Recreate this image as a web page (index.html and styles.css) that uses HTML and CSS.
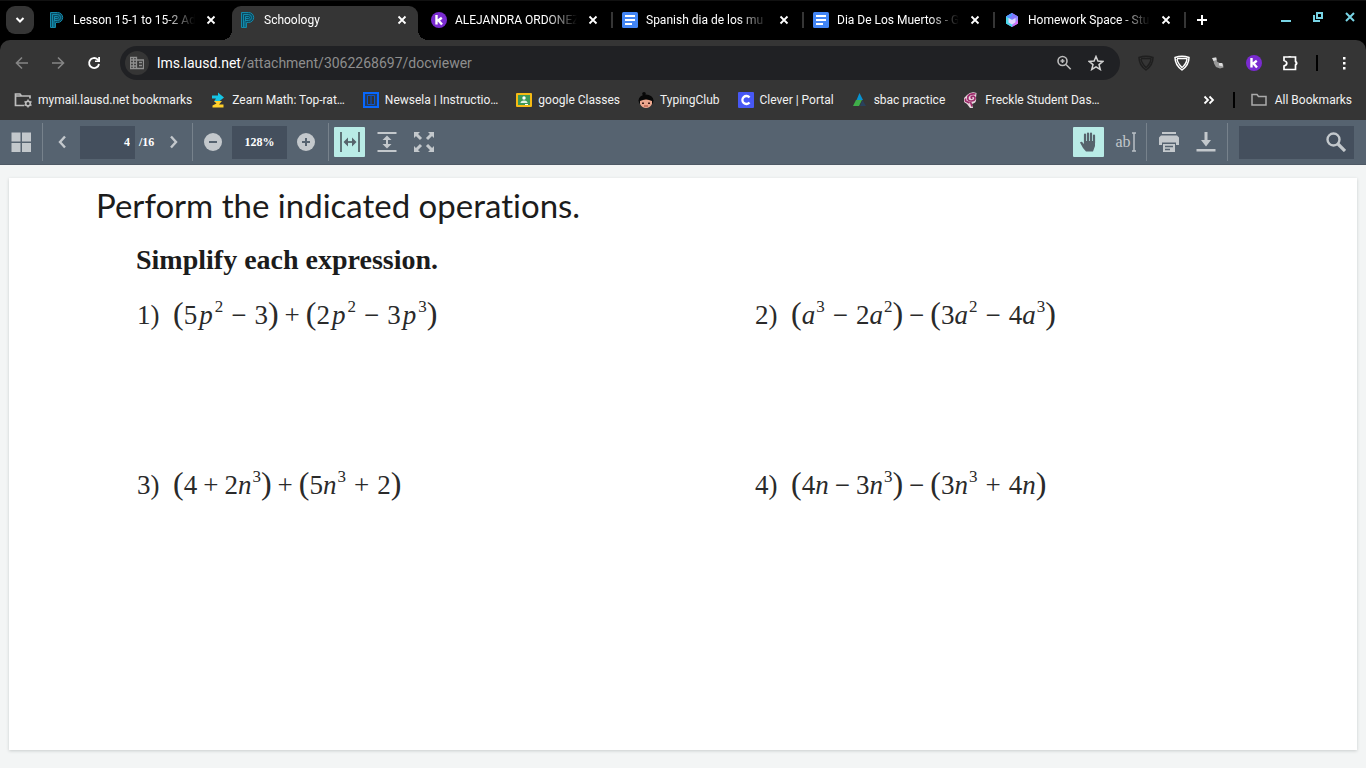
FILE: index.html
```html
<!DOCTYPE html>
<html lang="en">
<head>
<meta charset="utf-8">
<title>Schoology</title>
<link rel="stylesheet" href="styles.css">
</head>
<body>
<svg class="defs" aria-hidden="true">
  <symbol id="x" viewBox="0 0 16 16"><path d="M4.500 4.500l7 7M11.500 4.500l-7 7" fill="none" stroke="#fff" stroke-width="1.800"/></symbol>
  <symbol id="ps" viewBox="0 0 16 16"><path d="M2 1h7a4 4 0 0 1 0 9H6v5H2z" fill="#0b4a60"/><g fill="none" stroke="#1389aa" stroke-width="1"><path d="M1.500 15.500V.500h7.200a4.500 4.500 0 0 1 0 10H6.500v5zM3.500 15V2.500h5a2.700 2.700 0 0 1 0 6H5V15M5.500 8V4.500h3a1 1 0 0 1 0 2H5.500"/></g></symbol>
  <symbol id="k" viewBox="0 0 16 16"><circle cx="8" cy="8" r="8" fill="#7a2bd0"/><path d="M5.500 3v9.500M10.800 5.800L6.500 9M7.500 8.500l3.500 4" fill="none" stroke="#fff" stroke-width="2.400"/></symbol>
  <symbol id="doc" viewBox="0 0 16 16"><rect width="16" height="16" rx="1.500" fill="#4285f4"/><path d="M3 4h10M3 8h10M3 12h7" stroke="#fff" stroke-width="2"/></symbol>
  <symbol id="shield" viewBox="0 0 16 16"><path d="M1 2.500Q8 .200 15 2.500Q15 10 8 15Q1 10 1 2.500z" fill="none" stroke="currentColor" stroke-width="1.500"/><path d="M3 3.500h10.500M3 4Q3.500 8 8 12.500M13 4Q12.500 9 7.500 13" fill="none" stroke="currentColor" stroke-width="1.500"/></symbol>
</svg>

<header class="browser">
  <div class="tabstrip">
    <button class="tab-search" aria-label="Search tabs"><svg width="12" height="12" viewBox="0 0 12 12"><path d="M2.500 4L6 7.500 9.500 4" fill="none" stroke="#fff" stroke-width="2"/></svg></button>
    <nav class="tabs" aria-label="Tabs">
      <div class="tab"><svg class="i16"><use href="#ps"/></svg><a class="tab-title" href="#">Lesson 15-1 to 15-2 Ad</a><button class="close" aria-label="Close tab"><svg class="i16"><use href="#x"/></svg></button></div>
      <div class="tab active"><svg class="i16"><use href="#ps"/></svg><a class="tab-title" href="#">Schoology</a><button class="close" aria-label="Close tab"><svg class="i16"><use href="#x"/></svg></button></div>
      <div class="tab"><svg class="i16"><use href="#k"/></svg><a class="tab-title" href="#">ALEJANDRA ORDONEZ</a><button class="close" aria-label="Close tab"><svg class="i16"><use href="#x"/></svg></button></div>
      <div class="tab ruled"><svg class="i16"><use href="#doc"/></svg><a class="tab-title" href="#">Spanish dia de los mu</a><button class="close" aria-label="Close tab"><svg class="i16"><use href="#x"/></svg></button></div>
      <div class="tab ruled"><svg class="i16"><use href="#doc"/></svg><a class="tab-title" href="#">Dia De Los Muertos - G</a><button class="close" aria-label="Close tab"><svg class="i16"><use href="#x"/></svg></button></div>
      <div class="tab ruled"><svg class="i16" viewBox="0 0 16 16"><path d="M8 1l6 3.500v7L8 15l-6-3.500v-7z" fill="#9b8cff"/><path d="M8 1l6 3.500-6 3-6-3z" fill="#8178ff"/><path d="M2 4.500l6 3V15l-6-3.500z" fill="#49d9e8"/><path d="M4.500 6l3.500 2 3.500-2v4.500L8 12.500l-3.500-2z" fill="#e2d5ff"/><path d="M2 4.500L8 1v3L4.500 6z" fill="#4a9cff"/><path d="M8 15l6-3.500V8l-3 3z" fill="#d86cf2"/></svg><a class="tab-title" href="#">Homework Space - Stu</a><button class="close" aria-label="Close tab"><svg class="i16"><use href="#x"/></svg></button></div>
    </nav>
    <button class="new-tab ruled" aria-label="New tab"><svg width="12" height="12" viewBox="0 0 12 12"><path d="M6 1v10M1 6h10" stroke="#fff" stroke-width="2"/></svg></button>
    <div class="window-controls">
      <button aria-label="Minimize"><svg class="i16" viewBox="0 0 16 16"><path d="M3 12h10" stroke="#78d4e5" stroke-width="2"/></svg></button>
      <button aria-label="Restore"><svg class="i16" viewBox="0 0 16 16"><path d="M7 4h5v5H7zM4 6v6h6" fill="none" stroke="#78d4e5" stroke-width="2"/></svg></button>
      <button aria-label="Close window"><svg class="i16" viewBox="0 0 16 16"><path d="M4 4l8 8M12 4l-8 8" stroke="#78d4e5" stroke-width="2"/></svg></button>
    </div>
  </div>

  <div class="toolbar">
    <div class="nav-buttons">
      <button aria-label="Back"><svg class="i16" viewBox="0 0 16 16"><path d="M14 8H3M8 2.500L2.500 8 8 13.500" fill="none" stroke="#858585" stroke-width="1.600"/></svg></button>
      <button aria-label="Forward"><svg class="i16" viewBox="0 0 16 16"><path d="M2 8h11M8 2.500L13.500 8 8 13.500" fill="none" stroke="#858585" stroke-width="1.600"/></svg></button>
      <button aria-label="Reload"><svg class="i16" viewBox="0 0 16 16"><path d="M13 9a5 5 0 1 1-1.500-4.600L13 6" fill="none" stroke="#fff" stroke-width="1.900"/><path d="M14 2v5H9V5.500h3.200V2z" fill="#fff"/></svg></button>
    </div>
    <div class="omnibox">
      <button class="site-info" aria-label="Site information"><svg width="14" height="14" viewBox="0 0 14 14"><path d="M.500 1.500h6v11h-6zM6.500 4h7v8.500h-7M.500 4h6M.500 7h6M.500 10h6M3.500 1.500v11M9 6.500h3M9 9.500h3" fill="none" stroke="#8f8f8f" stroke-width="1.300"/></svg></button>
      <a class="url" href="#"><span>lms.lausd.net</span>/attachment/3062268697/docviewer</a>
      <button aria-label="Zoom"><svg class="i16" viewBox="0 0 16 16"><circle cx="6.500" cy="6" r="4.500" fill="none" stroke="#bcbcbc" stroke-width="1.600"/><path d="M10 9.500l4.700 4.700M4.500 6h4M6.500 4v4" stroke="#bcbcbc" stroke-width="1.600"/></svg></button>
      <button aria-label="Bookmark this page"><svg class="i16" viewBox="0 0 16 16"><path d="M8 1.500l1.900 4.600 5 .3-3.900 3.200 1.300 4.900L8 11.800l-4.300 2.700L5 9.600 1.100 6.400l5-.3z" fill="none" stroke="#d2d2d2" stroke-width="1.500"/></svg></button>
    </div>
    <div class="extensions">
      <button class="dim" aria-label="Shield extension"><svg class="i16"><use href="#shield"/></svg></button>
      <button aria-label="Privacy extension"><svg class="i16"><use href="#shield"/></svg></button>
      <button aria-label="Boot extension"><svg class="i16" viewBox="0 0 16 16"><path d="M3 3l3.500-.5.5 4 2.500 1.500 3.500.5.500 4-3.500 1L6 12 4 8.500z" fill="#999"/><path d="M2 3l4-.5.5 2.500-3 1zM9 8l3 0 1 3.500-4-1z" fill="#ddd"/></svg></button>
      <button aria-label="Kami extension"><svg class="i16"><use href="#k"/></svg></button>
      <button aria-label="Extensions"><svg class="i16" viewBox="0 0 16 16"><path d="M2 2h11.500v4.500q2.500 1.500 0 3.500v4.500H2v-3.500q2.800-.8 2.800-2.700T2 5.500z" fill="none" stroke="#fff" stroke-width="1.700"/><path d="M6 2q1.800-2 3.500 0zM13.500 6q3 2 0 4.500z" fill="#fff"/></svg></button>
      <i class="rule"></i>
      <button aria-label="Menu"><svg class="i16" viewBox="0 0 16 16"><path d="M7 2h2.500v2.500H7zM7 7h2.500v2.500H7zM7 12h2.500v2.500H7z" fill="#fff"/></svg></button>
    </div>
  </div>

  <nav class="bookmarks" aria-label="Bookmarks">
    <a href="#"><svg width="18" height="16" viewBox="0 0 18 16"><path d="M10 13.500H1.500V2H6l1.500 2H16v2.500M1.500 4H7" fill="none" stroke="#bdbdbd" stroke-width="1.700"/><circle cx="14" cy="11.500" r="2.300" fill="none" stroke="#bdbdbd" stroke-width="1.600"/><path d="M14 7.500v1.700M14 13.800v1.700M10.500 9.500l1.500.9M16 12.600l1.500.9M10.500 13.500l1.500-.9M16 10.400l1.500-.9" stroke="#bdbdbd" stroke-width="1.500"/></svg>mymail.lausd.net bookmarks</a>
    <a href="#"><svg class="i16" viewBox="0 0 16 16"><path d="M2 3.500h6V.500L14 5.500 9 9.500H4L6 6.500H2z" fill="#16c5e5"/><path d="M4 9h8l-3 3.500h4.500v3H2.500v-2l4-2z" fill="#ffd02b"/></svg>Zearn Math: Top-rat…</a>
    <a href="#"><svg class="i16" viewBox="0 0 16 16"><path d="M1 1h14v14H1z" fill="#263b5c" stroke="#0868ff" stroke-width="2"/><path d="M4.500 3.500h7v9h-7zM8 3.500v9" fill="#333" stroke="#0b56cf"/></svg>Newsela | Instructio…</a>
    <a href="#"><svg class="i16" viewBox="0 0 16 16"><rect y="1" width="16" height="14" rx="1" fill="#f5ba14"/><path d="M2 3h12v10H2z" fill="#3d9857"/><circle cx="8" cy="6" r="1.700" fill="#fff"/><path d="M4.500 11Q4.500 8.500 8 8.500t3.500 2.500z" fill="#dff1e3"/><path d="M9 12h3v1H9z" fill="#fff"/></svg>google Classes</a>
    <a href="#"><svg class="i16" viewBox="0 0 16 16"><circle cx="6" cy="1.800" r="1.800" fill="#080808"/><ellipse cx="8" cy="8.500" rx="7.500" ry="6" fill="#080808"/><path d="M2 9q6-3 12 0v3q-2 4-6 4t-6-4z" fill="#eda78e"/><path d="M4 10.500h2v1.500H4zM10 10.500h2v1.500h-2z" fill="#401c18"/><path d="M6 14h4" stroke="#a34034"/></svg>TypingClub</a>
    <a href="#"><svg class="i16" viewBox="0 0 16 16"><rect width="16" height="16" rx="1" fill="#4758f5"/><path d="M11.500 5.500A4 4 0 1 0 11.500 10.500" fill="none" stroke="#fff" stroke-width="2.300"/></svg>Clever | Portal</a>
    <a href="#"><svg class="i16" viewBox="0 0 16 16"><path d="M7.500 1L11 8H4.500z" fill="#0793d1"/><path d="M4 8h6L7 14H1z" fill="#3fae49"/><path d="M10.500 8L14 14H8z" fill="#29415c"/></svg>sbac practice</a>
    <a href="#"><svg class="i16" viewBox="0 0 16 16"><path d="M13.500 1Q8-1 4 3L1 6v4l3 2 3 4h3l-1-4q5-1 4-6z" fill="#e8d8df"/><path d="M12.500 2Q7 1 5 4.500q-1 4.500 3 4.500 4.500 0 4-3.500-1-2-3.500-1-1 1.500 1 2M2.500 6.500v2.500l4 2M7.500 10l1.500 4.500" fill="none" stroke="#9d2b6b" stroke-width="1.700"/></svg>Freckle Student Das…</a>
    <button class="more" aria-label="More bookmarks"><svg width="12" height="12" viewBox="0 0 12 12"><path d="M1.500 2.500L5 6 1.500 9.500M6.500 2.500L10 6 6.500 9.500" fill="none" stroke="#fff" stroke-width="1.800"/></svg></button>
    <i class="rule"></i>
    <a class="all" href="#"><svg class="i16" viewBox="0 0 16 16"><path d="M1 13V2.500h5l1.500 2H15V13z" fill="none" stroke="#aaa" stroke-width="1.500"/></svg>All Bookmarks</a>
  </nav>
</header>

<div class="viewer-bar" role="toolbar" aria-label="Document">
  <div class="group thumbs"><button aria-label="Thumbnails"><svg class="i20" viewBox="0 0 20 20"><path d="M.500.500h9v9h-9zM11 .500h9v9h-9zM.500 11h9v9h-9zM11 11h9v9h-9z" fill="#c3c8cc"/></svg></button></div>
  <div class="group pages">
    <button aria-label="Previous page"><svg class="i16" viewBox="0 0 16 16"><path d="M11 2.500L6 8l5 5.500" fill="none" stroke="#c3c8cc" stroke-width="2.400"/></svg></button>
    <input class="page-number" type="text" value="4" aria-label="Page number"><span class="page-total">/16</span>
    <button aria-label="Next page"><svg class="i16" viewBox="0 0 16 16"><path d="M5 2.500L10 8l-5 5.500" fill="none" stroke="#c3c8cc" stroke-width="2.400"/></svg></button>
  </div>
  <div class="group zoom">
    <button aria-label="Zoom out"><svg class="i18" viewBox="0 0 18 18"><circle cx="9" cy="9" r="9" fill="#c3c8cc"/><path d="M5 9h8" stroke="#566370" stroke-width="2"/></svg></button>
    <input class="zoom-level" type="text" value="128%" aria-label="Zoom level">
    <button aria-label="Zoom in"><svg class="i18" viewBox="0 0 18 18"><circle cx="9" cy="9" r="9" fill="#c3c8cc"/><path d="M5 9h8M9 5v8" stroke="#566370" stroke-width="2"/></svg></button>
  </div>
  <div class="group fit">
    <button class="on" aria-label="Fit width"><svg class="i20" viewBox="0 0 20 20"><path d="M1 0v20M19 0v20M6 10h8" stroke="#5f7479" stroke-width="2"/><path d="M3.500 10L8 5.500v9zM16.500 10L12 5.500v9z" fill="#56636c"/></svg></button>
    <button aria-label="Fit height"><svg class="i20" viewBox="0 0 20 20"><path d="M.500 1h19M.500 19h19M10 6v8" stroke="#c3c8cc" stroke-width="2"/><path d="M10 3.500L14.500 8h-9zM10 16.500L14.500 12h-9z" fill="#c3c8cc"/></svg></button>
    <button aria-label="Full screen"><svg class="i20" viewBox="0 0 20 20"><path d="M2 2l5 5M18 2l-5 5M2 18l5-5M18 18l-5-5" stroke="#c3c8cc" stroke-width="3"/><path d="M0 0h6L0 6zM20 0h-6l6 6zM0 20v-6l6 6zM20 20v-6l-6 6z" fill="#c3c8cc"/></svg></button>
  </div>
  <div class="group modes">
    <button class="on" aria-label="Pan"><svg class="i20" viewBox="0 0 20 20"><path d="M6 11V2.500M9 10V1.500M12 10V1.500M15 11V3.500" fill="none" stroke="#56636c" stroke-width="2.200" stroke-linecap="round"/><path d="M5 9h11v5l-2 5.500H7L4 16 1 10.500q1.500-1.500 3 .5l1 1z" fill="#56636c"/></svg></button>
    <button class="select-text" aria-label="Select text"><span>ab</span><svg width="4" height="20" viewBox="0 0 4 20"><path d="M0 1h4M0 19h4M2 1v18" stroke="#b9c0c5" stroke-width="1.500"/></svg></button>
  </div>
  <div class="group output">
    <button aria-label="Print"><svg class="i20" viewBox="0 0 20 20"><path d="M3 0h14v2H3zM2 3.500h16l2 2V13h-3v-2.500H3V13H0V5.500zM4 12h12v8H4z" fill="#c3c8cc"/><path d="M6 14.500h8M6 17.500h5" stroke="#566370" stroke-width="1.400"/></svg></button>
    <button aria-label="Download"><svg class="i20" viewBox="0 0 20 20"><path d="M8.500 0h3v8H15l-5 6.500L5 8h3.500zM.500 17h19v2.500h-19z" fill="#c3c8cc"/></svg></button>
  </div>
  <form class="find"><input type="search" aria-label="Find in document"><button type="button" aria-label="Search"><svg class="i20" viewBox="0 0 20 20"><circle cx="7.500" cy="7.500" r="6" fill="none" stroke="#c3c8cc" stroke-width="2.400"/><path d="M12 12l7 7" stroke="#c3c8cc" stroke-width="3.200"/></svg></button></form>
</div>

<main class="viewer">
  <article class="page">
    <h1>Perform the indicated operations.</h1>
    <h2>Simplify each expression.</h2>
    <ol class="problems">
      <li><span class="num">1)</span><b>(</b>5<i class="p">p</i><sup>2</sup><u>−</u>3<b>)</b><s>+</s><b>(</b>2<i class="p">p</i><sup>2</sup><u>−</u>3<i class="p">p</i><sup>3</sup><b>)</b></li>
      <li><span class="num">2)</span><b>(</b><i>a</i><sup>3</sup><u>−</u>2<i>a</i><sup>2</sup><b>)</b><s>−</s><b>(</b>3<i>a</i><sup>2</sup><u>−</u>4<i>a</i><sup>3</sup><b>)</b></li>
      <li><span class="num">3)</span><b>(</b>4<s>+</s>2<i>n</i><sup>3</sup><b>)</b><s>+</s><b>(</b>5<i>n</i><sup>3</sup><u>+</u>2<b>)</b></li>
      <li><span class="num">4)</span><b>(</b>4<i>n</i><s>−</s>3<i>n</i><sup>3</sup><b>)</b><s>−</s><b>(</b>3<i>n</i><sup>3</sup><u>+</u>4<i>n</i><b>)</b></li>
    </ol>
  </article>
</main>
</body>
</html>
```
FILE: styles.css
```css
* { box-sizing: border-box; }
body { margin: 0; min-height: 100vh; display: flex; flex-direction: column; background: #f3f5f5; font-family: Roboto, sans-serif; font-size: 12px; }
button { display: flex; align-items: center; justify-content: center; padding: 0; border: 0; background: none; color: #fff; font: inherit; }
input { border: 0; border-radius: 0; padding: 0; font: inherit; outline: 0; }
a { color: #fff; text-decoration: none; }
svg { display: block; flex: none; }
.defs { position: absolute; width: 0; height: 0; }
.i16 { width: 16px; height: 16px; }
.i18 { width: 18px; height: 18px; }
.i20 { width: 20px; height: 20px; }
.rule { width: 2px; height: 16px; background: #000; }

/* Tab strip */
.browser { background: #000; }
.tabstrip { display: flex; align-items: center; height: 40px; padding: 0 8px 0 6px; box-shadow: inset 0 1px #111; }
.tab-search { width: 28px; height: 28px; margin-right: 7px; border-radius: 9px; background: #353535; flex: none; }
.tabs { display: flex; align-self: stretch; flex: 0 1 1146px; min-width: 0; }
.tab { position: relative; display: flex; align-items: center; gap: 8px; flex: 1 1 0; min-width: 0; padding: 0 13px 0 8px; }
.tab-title { flex: 1; min-width: 0; overflow: hidden; white-space: nowrap; mask-image: linear-gradient(to right, #000 calc(100% - 30px), transparent); }
.close { flex: none; }
.active { margin: 6px 5px 0 0; padding: 0 8px 6px; border-radius: 9px 9px 0 0; background: #353535; }
.active::before, .active::after { content: ""; position: absolute; bottom: 0; width: 10px; height: 10px; }
.active::before { right: 100%; background: radial-gradient(circle at 0 0, transparent 10px, #353535 10px); }
.active::after { left: 100%; background: radial-gradient(circle at 100% 0, transparent 10px, #353535 10px); }
.ruled { position: relative; }
.ruled::before { content: ""; position: absolute; left: -3px; top: calc(50% - 8px); width: 2px; height: 16px; background: #353535; }
.new-tab { width: 30px; height: 30px; }
.window-controls { display: flex; gap: 16px; margin: -6px 0 0 auto; }

/* Address row */
.toolbar { display: flex; align-items: center; height: 46px; padding: 0 14px; border-radius: 10px 10px 0 0; background: #353535; }
.nav-buttons { display: flex; gap: 20px; margin-right: 18px; }
.omnibox { display: flex; align-items: center; gap: 16px; flex: 1; min-width: 0; height: 34px; padding: 0 16px 0 5px; border-radius: 17px; background: #202124; }
.site-info { width: 24px; height: 24px; margin-right: -8px; border-radius: 50%; background: #353535; }
.url { flex: 1; min-width: 0; overflow: hidden; white-space: nowrap; font-size: 14px; color: #8e8e8e; }
.url span { color: #fff; }
.extensions { display: flex; align-items: center; gap: 20px; margin-left: 18px; }
.dim { color: #1f1f1f; }
.extensions .rule { margin: 0 -2px; }

/* Bookmarks row */
.bookmarks { display: flex; align-items: center; gap: 18px; height: 34px; padding: 0 14px 6px; background: #353535; }
.bookmarks a { display: flex; align-items: center; gap: 6px; white-space: nowrap; color: #f1f1f1; }
.more { margin-left: auto; }
.bookmarks .all { gap: 8px; margin-left: -2px; }

/* Document toolbar */
.viewer-bar { display: flex; align-items: center; height: 45px; padding: 0 12px 0 11px; background: #566370; border-bottom: 1px solid #4e5965; font-family: "Liberation Serif", serif; }
.group { display: flex; align-items: center; height: 38px; border-right: 1px solid #77828c; }
.thumbs { padding-right: 11px; }
.pages { padding: 0 10px 0 11px; }
.page-number, .zoom-level { width: 55px; height: 33px; background: #444f5d; color: #fff; font-size: 12px; font-weight: 700; }
.page-number { margin-left: 10px; padding-right: 5px; text-align: right; }
.page-total { width: 31px; padding-left: 4px; color: #fff; font-weight: 700; }
.zoom { gap: 10px; padding: 0 13px 0 11px; }
.zoom-level { text-align: center; }
.fit { gap: 6px; padding-left: 5px; border: 0; }
.fit button, .modes button, .output button { width: 31px; height: 30px; border-radius: 1px; }
.viewer-bar .on { background: #b9ebe6; }
.modes { gap: 6px; margin-left: auto; padding-right: 5px; }
.select-text { gap: 1px; color: #c3c8cc; font-size: 16px; }
.output { gap: 6px; padding: 0 6px; }
.find { display: flex; align-items: center; width: 115px; height: 33px; margin-left: 11px; padding-right: 8px; background: #444f5d; }
.find input { flex: 1; min-width: 0; height: 100%; background: transparent; color: #fff; }

/* Document */
.viewer { flex: 1; display: flex; padding: 13px 9px 18px; }
.page { flex: 1; padding: 4px 87px 24px; background: #fff; box-shadow: 0 1px 3px #c9cdcd; color: #1c1c1c; }
h1 { margin: 0; font: 400 33px/46px Lato, sans-serif; font-variant-ligatures: none; }
h2 { margin: 16px 40px 0; font: 700 28px/32px "Liberation Serif", serif; }
.problems { display: grid; grid-template-columns: 54fr 45fr; row-gap: 130px; margin: 19px 0 0; padding: 0 0 0 41px; list-style: none; font: 27px/40px "Liberation Serif", serif; color: #2a2a2a; }
.problems li { white-space: nowrap; }
.num { display: inline-block; width: 36px; }
.problems b { font-size: 32px; font-weight: 400; line-height: 1; }
.problems .p { padding: 0 1px 0 2px; }
.problems sup { padding-left: 1px; font-size: 17px; line-height: 0; vertical-align: 12px; }
.problems u, .problems s { text-decoration: none; }
.problems u { margin: 0 8px; }
.problems s { margin: 0 6px; }
```
